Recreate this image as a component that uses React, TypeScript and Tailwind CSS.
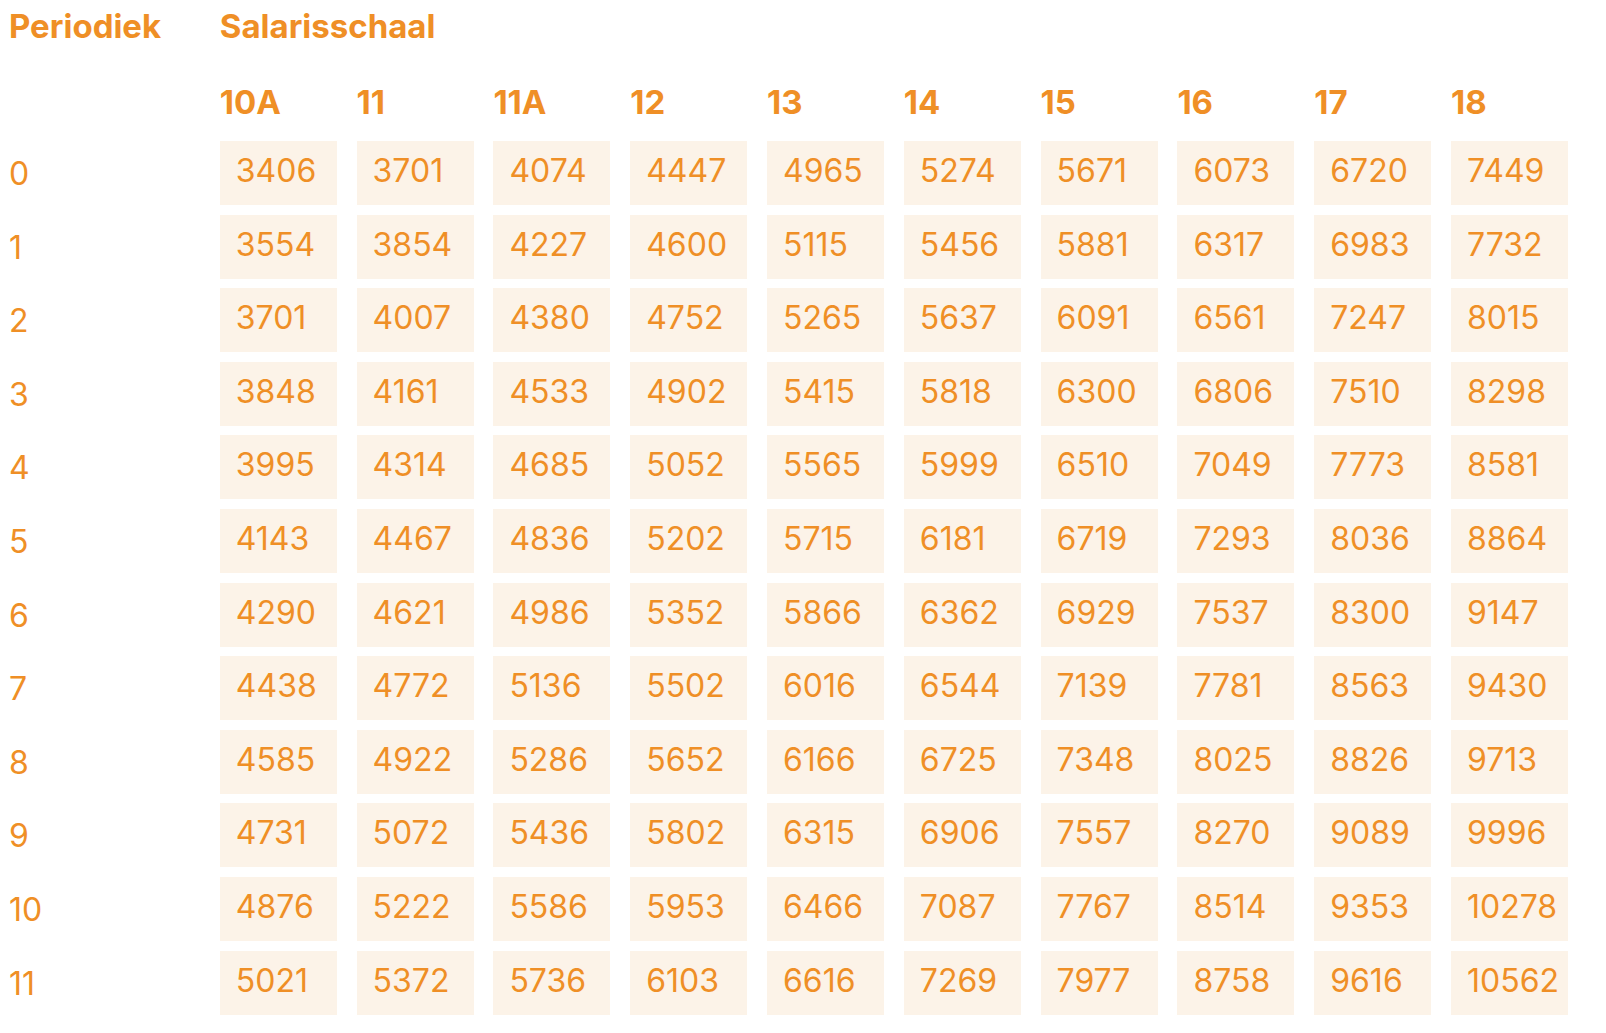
import { Fragment } from 'react'

const columns = ['10A', '11', '11A', '12', '13', '14', '15', '16', '17', '18']

const rows: number[][] = [
  [3406, 3701, 4074, 4447, 4965, 5274, 5671, 6073, 6720, 7449],
  [3554, 3854, 4227, 4600, 5115, 5456, 5881, 6317, 6983, 7732],
  [3701, 4007, 4380, 4752, 5265, 5637, 6091, 6561, 7247, 8015],
  [3848, 4161, 4533, 4902, 5415, 5818, 6300, 6806, 7510, 8298],
  [3995, 4314, 4685, 5052, 5565, 5999, 6510, 7049, 7773, 8581],
  [4143, 4467, 4836, 5202, 5715, 6181, 6719, 7293, 8036, 8864],
  [4290, 4621, 4986, 5352, 5866, 6362, 6929, 7537, 8300, 9147],
  [4438, 4772, 5136, 5502, 6016, 6544, 7139, 7781, 8563, 9430],
  [4585, 4922, 5286, 5652, 6166, 6725, 7348, 8025, 8826, 9713],
  [4731, 5072, 5436, 5802, 6315, 6906, 7557, 8270, 9089, 9996],
  [4876, 5222, 5586, 5953, 6466, 7087, 7767, 8514, 9353, 10278],
  [5021, 5372, 5736, 6103, 6616, 7269, 7977, 8758, 9616, 10562],
]

const grid = 'grid grid-cols-[191px_repeat(10,117px)] gap-x-[19.8px]'

export default function App() {
  return (
    <div className="min-h-screen bg-white pl-[9px] pt-[10px] font-['Inter','Liberation_Sans',sans-serif] text-[#ef8f26]">
      <div className={grid}>
        <div className="text-[33px] font-bold leading-none">Periodiek</div>
        <div className="col-span-10 text-[33px] font-bold leading-none">Salarisschaal</div>
      </div>

      <div className={`${grid} mt-[43px] mb-[22px]`}>
        <div />
        {columns.map((c) => (
          <div key={c} className="text-[33px] font-bold leading-none">
            {c}
          </div>
        ))}
      </div>

      <div className={`${grid} gap-y-[9.6px]`}>
        {rows.map((row, i) => (
          <Fragment key={i}>
            <div className="h-[64px] pt-[17px] text-[32px] leading-none">{i}</div>
            {row.map((v, j) => (
              <div
                key={j}
                className="h-[64px] bg-[#fcf3e8] pl-[16px] pt-[14px] text-[32px] leading-none"
              >
                {v}
              </div>
            ))}
          </Fragment>
        ))}
      </div>
    </div>
  )
}
